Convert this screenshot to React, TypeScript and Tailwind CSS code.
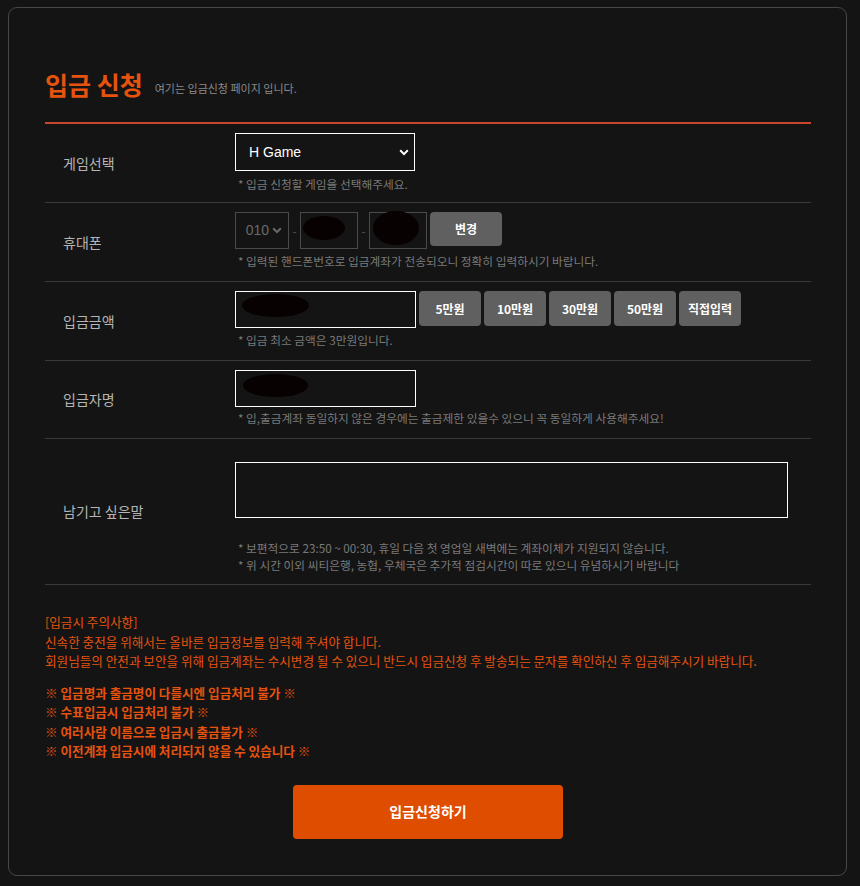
import { useState } from 'react';

const amounts = ['5만원', '10만원', '30만원', '50만원', '직접입력'];

const notices = [
  '※ 입금명과 출금명이 다를시엔 입금처리 불가 ※',
  '※ 수표입금시 입금처리 불가 ※',
  '※ 여러사람 이름으로 입금시 출금불가 ※',
  '※ 이전계좌 입금시에 처리되지 않을 수 있습니다 ※',
];

const Chevron = ({ color }: { color: string }) => (
  <svg width="10" height="7" viewBox="0 0 10 7" fill="none">
    <path d="M1.2 1.3 5 5.1 8.8 1.3" stroke={color} strokeWidth="2" />
  </svg>
);

const Blob = ({ className }: { className: string }) => (
  <span className={`absolute bg-[#070101] rounded-[50%] ${className}`} />
);

const Row = ({
  label,
  className,
  children,
}: {
  label: string;
  className: string;
  children: React.ReactNode;
}) => (
  <div className={`flex border-b border-[#3a3a3a] ${className}`}>
    <div className="w-[190px] pl-[18px] flex items-center text-[14px] text-[#b5b5b5]">{label}</div>
    <div className="flex-1 flex flex-col">{children}</div>
  </div>
);

const Hint = ({ children }: { children: React.ReactNode }) => (
  <p className="text-[11.7px] leading-[17px] text-[#7a7a7a] pl-[3px]">{children}</p>
);

const App = () => {
  const [game, setGame] = useState('H Game');

  return (
    <div
      className="min-h-[886px] bg-[#141414] pt-[7px] pl-[8px]"
      style={{ fontFamily: '"Noto Sans CJK KR", "Noto Sans", sans-serif' }}
    >
      <div className="w-[839px] h-[869px] border border-[#474747] rounded-[9px] bg-[#141414] pt-[55px] pl-[36px] pr-[35px]">
        <div className="flex items-end gap-[12px] h-[36px]">
          <h1 className="text-[25px] leading-[30px] font-bold text-[#e5530f]">입금 신청</h1>
          <span className="text-[11px] leading-[20px] text-[#8a8a8a] pb-[1px]">여기는 입금신청 페이지 입니다.</span>
        </div>
        <div className="mt-[23px] h-[2px] bg-[#c9452c]" />

        <Row label="게임선택" className="h-[79px]">
          <div className="pt-[9px]">
            <div className="relative w-[180px] h-[38px] border border-white flex items-center justify-between pl-[13px] pr-[5px]">
              <select
                value={game}
                onChange={(e) => setGame(e.target.value)}
                className="absolute inset-0 opacity-0"
              >
                <option>H Game</option>
              </select>
              <span className="text-[14px] text-white" style={{ fontFamily: '"Liberation Sans", Arial, sans-serif' }}>
                {game}
              </span>
              <Chevron color="#ffffff" />
            </div>
            <div className="mt-[4px]">
              <Hint>* 입금 신청할 게임을 선택해주세요.</Hint>
            </div>
          </div>
        </Row>

        <Row label="휴대폰" className="h-[79px]">
          <div className="pt-[9px]">
            <div className="flex items-center h-[37px]">
              <div className="w-[54px] h-[37px] border border-[#4a4a4a] flex items-center justify-end gap-[3px] pr-[6px] text-[14px] text-[#6a6a6a]" style={{ fontFamily: '"Liberation Sans", Arial, sans-serif' }}>
                010
                <Chevron color="#6a6a6a" />
              </div>
              <span className="w-[11px] text-center text-[12px] text-[#555]">-</span>
              <div className="relative w-[58px] h-[37px] border border-[#4a4a4a]">
                <Blob className="left-[2px] top-[3px] w-[42px] h-[24px]" />
              </div>
              <span className="w-[11px] text-center text-[12px] text-[#555]">-</span>
              <div className="relative w-[58px] h-[37px] border border-[#4a4a4a]">
                <Blob className="left-[3px] top-[-2px] w-[46px] h-[34px]" />
              </div>
              <button className="ml-[3px] w-[72px] h-[34px] rounded-[4px] bg-[#606060] text-[12px] font-bold text-white self-start">
                변경
              </button>
            </div>
            <div className="mt-[3px]">
              <Hint>* 입력된 핸드폰번호로 입금계좌가 전송되오니 정확히 입력하시기 바랍니다.</Hint>
            </div>
          </div>
        </Row>

        <Row label="입금금액" className="h-[79px]">
          <div className="pt-[9px]">
            <div className="flex items-start gap-[3px]">
              <div className="relative w-[181px] h-[37px] border border-white">
                <Blob className="left-[6px] top-[2px] w-[67px] h-[23px]" />
              </div>
              {amounts.map((item, index) => (
                <button
                  key={`amount-${index}`}
                  className="w-[62px] h-[35px] rounded-[4px] bg-[#606060] text-[12px] font-bold text-white"
                >
                  {item}
                </button>
              ))}
            </div>
            <div className="mt-[3px]">
              <Hint>* 입금 최소 금액은 3만원입니다.</Hint>
            </div>
          </div>
        </Row>

        <Row label="입금자명" className="h-[78px]">
          <div className="pt-[9px]">
            <div className="relative w-[181px] h-[37px] border border-white">
              <Blob className="left-[7px] top-[3px] w-[65px] h-[23px]" />
            </div>
            <div className="mt-[2px]">
              <Hint>* 입,출금계좌 동일하지 않은 경우에는 출금제한 있을수 있으니 꼭 동일하게 사용해주세요!</Hint>
            </div>
          </div>
        </Row>

        <Row label="남기고 싶은말" className="h-[146px]">
          <div className="pt-[23px]">
            <textarea className="block w-[553px] h-[56px] border border-white bg-transparent resize-none outline-none text-white" />
            <div className="mt-[21px]">
              <Hint>* 보편적으로 23:50 ~ 00:30, 휴일 다음 첫 영업일 새벽에는 계좌이체가 지원되지 않습니다.</Hint>
              <Hint>* 위 시간 이외 씨티은행, 농협, 우체국은 추가적 점검시간이 따로 있으니 유념하시기 바랍니다</Hint>
            </div>
          </div>
        </Row>

        <div className="pt-[27px] text-[12.6px] leading-[19.5px] text-[#e5530f]">
          <p>[입금시 주의사항]</p>
          <p>신속한 충전을 위해서는 올바른 입금정보를 입력해 주셔야 합니다.</p>
          <p>회원님들의 안전과 보안을 위해 입금계좌는 수시변경 될 수 있으니 반드시 입금신청 후 발송되는 문자를 확인하신 후 입금해주시기 바랍니다.</p>
          <div className="mt-[12px] font-bold">
            {notices.map((item, index) => (
              <p key={`notice-${index}`}>{item}</p>
            ))}
          </div>
        </div>

        <div className="flex justify-center mt-[24px]">
          <button className="w-[270px] h-[54px] rounded-[4px] bg-[#df4e00] text-[14px] font-bold text-white">
            입금신청하기
          </button>
        </div>
      </div>
    </div>
  );
};

export default App;
